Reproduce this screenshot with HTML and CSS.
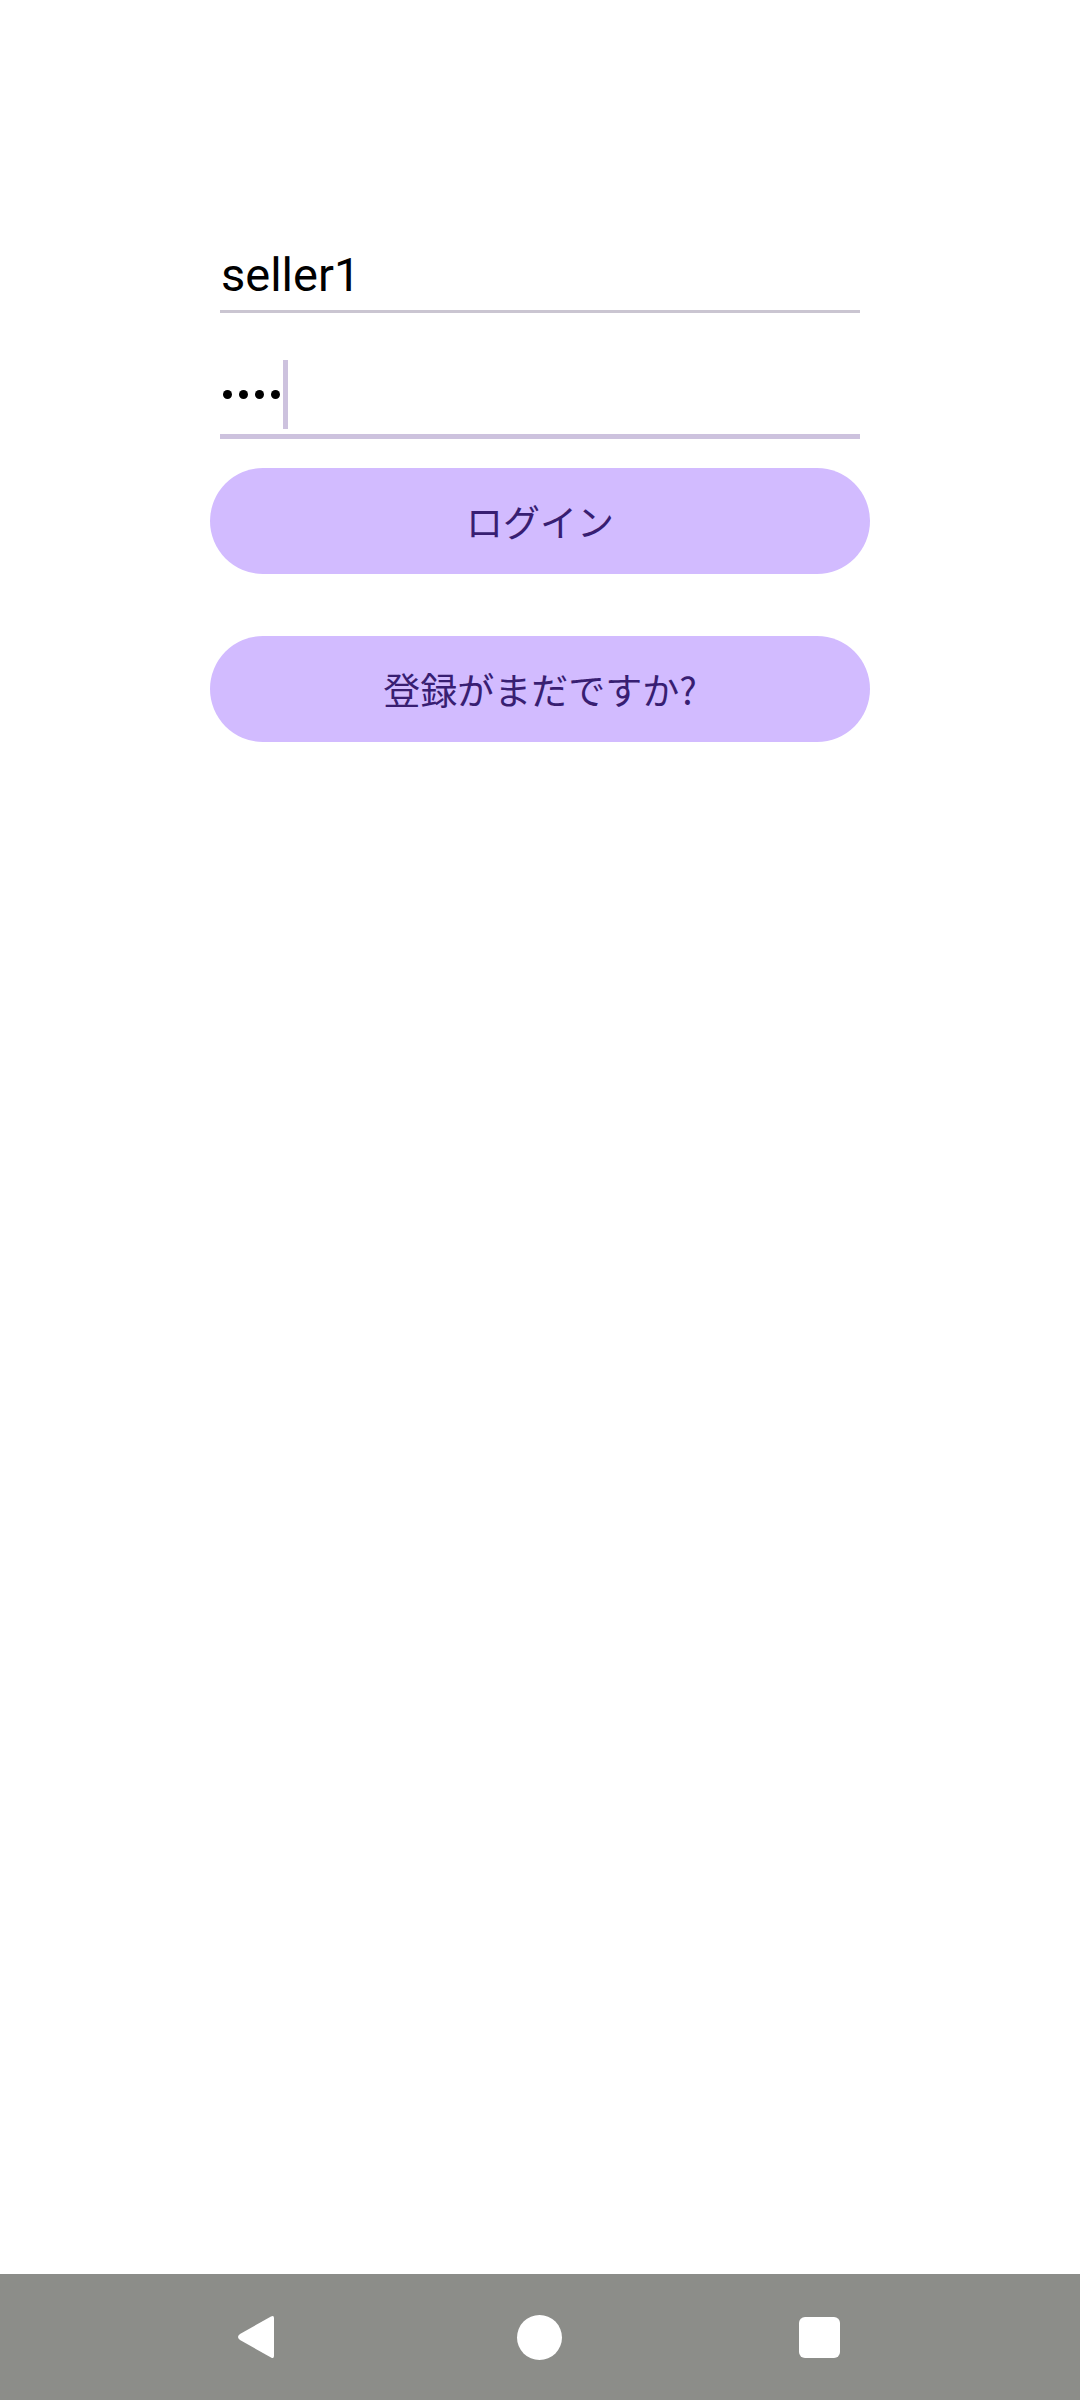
FILE: index.html
```html
<!DOCTYPE html>
<html lang="ja">
<head>
<meta charset="utf-8">
<title>ログイン</title>
<link rel="stylesheet" href="styles.css">
</head>
<body>
<div class="screen">
  <main class="content">
    <form class="form">
      <div class="field field-user">
        <span class="field-text">seller1</span>
      </div>
      <div class="field field-pass">
        <div class="pass-row">
          <span class="dot"></span><span class="dot"></span><span class="dot"></span><span class="dot"></span>
          <span class="cursor"></span>
        </div>
      </div>
      <button type="button" class="btn btn-login">ログイン</button>
      <button type="button" class="btn btn-register">登録がまだですか?</button>
    </form>
  </main>
  <nav class="navbar">
    <svg class="nav-icon" width="44" height="48" viewBox="0 0 44 48">
      <path d="M38 5 Q38 2 35 3.5 L4 21 Q0 24 4 27 L35 44.5 Q38 46 38 43 Z" fill="#fff"/>
    </svg>
    <span class="nav-home"></span>
    <span class="nav-recent"></span>
  </nav>
</div>
</body>
</html>
```
FILE: styles.css
```css
html, body {
  margin: 0;
  padding: 0;
  background: #ffffff;
}

.screen {
  width: 1080px;
  height: 2400px;
  display: flex;
  flex-direction: column;
}

.content {
  flex: 1;
  display: flex;
  justify-content: center;
  padding-top: 240px;
}

.form {
  width: 660px;
  display: flex;
  flex-direction: column;
  align-items: center;
  margin: 0;
}

.field {
  width: 640px;
  box-sizing: content-box;
}

.field-user {
  height: 70px;
  border-bottom: 3px solid #cac5d1;
  font-family: Roboto, "Noto Sans", sans-serif;
  font-size: 47px;
  line-height: 70px;
  color: #000000;
}

.field-text {
  display: block;
  padding-left: 1px;
}

.field-pass {
  height: 121px;
  border-bottom: 5px solid #cdc2de;
  display: flex;
  align-items: flex-end;
}

.pass-row {
  display: flex;
  align-items: center;
  padding-left: 3px;
  padding-bottom: 5px;
}

.dot {
  width: 9px;
  height: 9px;
  border-radius: 50%;
  background: #000;
  margin-right: 7px;
}

.dot:nth-child(4) {
  margin-right: 3px;
}

.cursor {
  width: 5px;
  height: 69px;
  background: #cdc2de;
}

.btn {
  width: 660px;
  height: 106px;
  border: none;
  border-radius: 53px;
  background: #d2bbff;
  color: #381e72;
  font-family: "Noto Sans CJK JP", Roboto, sans-serif;
  font-size: 37px;
  font-weight: 400;
  padding: 0;
  display: flex;
  align-items: center;
  justify-content: center;
}

.btn-login {
  margin-top: 29px;
}

.btn-register {
  margin-top: 62px;
}

.navbar {
  height: 126px;
  background: #8c8d89;
  display: flex;
  align-items: center;
  position: relative;
}

.nav-icon {
  margin-left: 236px;
}

.nav-home {
  width: 45px;
  height: 45px;
  border-radius: 50%;
  background: #fff;
  margin-left: 237px;
}

.nav-recent {
  width: 41px;
  height: 41px;
  border-radius: 6px;
  background: #fff;
  margin-left: 237px;
}
```
